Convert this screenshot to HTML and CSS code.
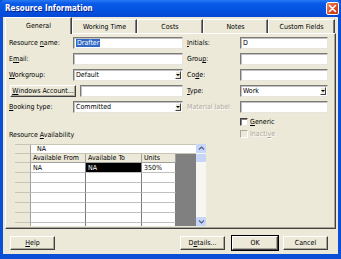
FILE: index.html
```html
<html>
<head>
<meta charset="UTF-8">
<title>Resource Information</title>
<link rel="stylesheet" href="styles.css">
</head>
<body>
<div class="window">
    <div class="titlebar">
        <span class="title">Resource Information</span>
        <span class="close">
            <svg width="9" height="9" viewBox="0 0 9 9"><path d="M1.5 1.5 L7.5 7.5 M7.5 1.5 L1.5 7.5" stroke="#fff" stroke-width="1.6" stroke-linecap="round"/></svg>
        </span>
    </div>

    <div class="client">
        <div class="tabs">
            <span class="tab active">General</span><span class="tab">Working Time</span><span class="tab">Costs</span><span class="tab">Notes</span><span class="tab">Custom Fields</span>
        </div>

        <div class="panel">
            <div class="form">
                <div class="col left">
                    <div class="fields">
                        <label>Resource <u>n</u>ame:</label>
                        <div class="input"><span class="sel">Drafter</span></div>
                        <label>E<u>m</u>ail:</label>
                        <div class="input"></div>
                        <label><u>W</u>orkgroup:</label>
                        <div class="input select">Default<span class="arrow"></span></div>
                        <div class="account">
                            <span class="btn account_btn"><u>W</u>indows Account...</span>
                            <div class="input"></div>
                        </div>
                        <label><u>B</u>ooking type:</label>
                        <div class="input select">Committed<span class="arrow"></span></div>
                    </div>

                    <div class="avail_label">Resource <u>A</u>vailability</div>

                    <div class="sheet_box">
                        <div class="sheet">
                            <div class="edit_row">
                                <span class="rh"></span><span class="edit_val">NA</span>
                            </div>
                            <div class="sheet_body">
                                <div class="cols">
                                    <div class="row head">
                                        <span class="rh"></span><span class="c from">Available From</span><span class="c to">Available To</span><span class="c units">Units</span>
                                    </div>
                                    <div class="row">
                                        <span class="rh"></span><span class="c from">NA</span><span class="c to current">NA</span><span class="c units">350%</span>
                                    </div>
                                    <div class="row"><span class="rh"></span><span class="c from"></span><span class="c to"></span><span class="c units"></span></div>
                                    <div class="row"><span class="rh"></span><span class="c from"></span><span class="c to"></span><span class="c units"></span></div>
                                    <div class="row"><span class="rh"></span><span class="c from"></span><span class="c to"></span><span class="c units"></span></div>
                                    <div class="row"><span class="rh"></span><span class="c from"></span><span class="c to"></span><span class="c units"></span></div>
                                    <div class="row"><span class="rh"></span><span class="c from"></span><span class="c to"></span><span class="c units"></span></div>
                                    <div class="row"><span class="rh"></span><span class="c from"></span><span class="c to"></span><span class="c units"></span></div>
                                </div>
                                <div class="dark"></div>
                            </div>
                        </div>
                        <div class="vscroll">
                            <span class="sbtn"><svg width="7" height="5" viewBox="0 0 7 5"><path d="M1 3.5 L3.5 1 L6 3.5" fill="none" stroke="#4d6185" stroke-width="1.2"/></svg></span>
                            <span class="thumb"></span>
                            <span class="track"></span>
                            <span class="sbtn"><svg width="7" height="5" viewBox="0 0 7 5"><path d="M1 1.5 L3.5 4 L6 1.5" fill="none" stroke="#4d6185" stroke-width="1.2"/></svg></span>
                        </div>
                    </div>
                </div>

                <div class="col right">
                    <div class="fields">
                        <label><u>I</u>nitials:</label>
                        <div class="input">D</div>
                        <label>Grou<u>p</u>:</label>
                        <div class="input"></div>
                        <label>Co<u>d</u>e:</label>
                        <div class="input"></div>
                        <label><u>T</u>ype:</label>
                        <div class="input select">Work<span class="arrow"></span></div>
                        <label class="disabled">Material label:</label>
                        <div class="input"></div>
                    </div>
                    <div class="checks">
                        <div class="check"><span class="box"></span><span><u>G</u>eneric</span></div>
                        <div class="check disabled"><span class="box"></span><span>Inacti<u>v</u>e</span></div>
                    </div>
                </div>
            </div>
        </div>

        <div class="buttons">
            <span class="btn help"><u>H</u>elp</span>
            <div class="right_buttons">
                <span class="btn details">D<u>e</u>tails...</span>
                <span class="btn ok">OK</span>
                <span class="btn cancel">Cancel</span>
            </div>
        </div>
    </div>
</div>
</body>
</html>
```

FILE: styles.css
```css
* {
    box-sizing: border-box;
}

body {
    margin: 0;
    font-family: "DejaVu Sans Condensed", "DejaVu Sans", sans-serif;
    font-size: 7px;
    color: #000;
    background: #0a4fd6;
}

u {
    text-decoration: underline;
    text-underline-offset: 1px;
}

.window {
    width: 341px;
    height: 259px;
    display: flex;
    flex-direction: column;
    background: #0a4fd6;
}

.titlebar {
    height: 17px;
    flex: 0 0 17px;
    display: flex;
    align-items: center;
    justify-content: space-between;
    padding: 0 2px 0 5px;
    background: linear-gradient(#2a7af5 0%, #0a5be8 20%, #0552e0 60%, #0448d4 100%);
    border-radius: 5px 5px 0 0;
}

.titlebar .title {
    color: #fff;
    font-family: "DejaVu Sans Condensed", "DejaVu Sans", sans-serif;
    font-weight: bold;
    font-size: 8px;
    text-shadow: 1px 1px #0a1e8a;
}

.titlebar .close {
    width: 13px;
    height: 13px;
    border: 1px solid #fff;
    border-radius: 2px;
    background: linear-gradient(135deg, #f08a64, #d9461c 60%, #c2381a);
    display: flex;
    align-items: center;
    justify-content: center;
}

.client {
    flex: 1;
    margin: 0 3px 5px 3px;
    background: #ece9d8;
    display: flex;
    flex-direction: column;
}

.tabs {
    height: 16px;
    display: flex;
    align-items: flex-end;
    padding-left: 2px;
}

.tab {
    height: 14px;
    display: flex;
    align-items: center;
    justify-content: center;
    border-top: 1px solid #fff;
    border-left: 1px solid #fff;
    border-right: 1px solid #404040;
    box-shadow: inset -1px 0 #808080;
    width: 65px;
}

.tab:first-child {
    width: 67px;
}

.tab:nth-child(3) {
    width: 66px;
}

.tab:last-child {
    width: 67px;
}

.tab.active {
    height: 17px;
    margin-bottom: -1px;
    position: relative;
    z-index: 1;
    background: #ece9d8;
    padding-bottom: 1px;
}

.panel {
    height: 196px;
    margin: 0 2px;
    border-top: 1px solid #fff;
    border-left: 1px solid #fff;
    border-right: 1px solid #404040;
    border-bottom: 1px solid #404040;
    box-shadow: inset -1px -1px #a9a797;
    padding: 3px 0 0 3px;
}

.form {
    display: flex;
    gap: 4px;
}

.col.left {
    width: 174px;
}

.col.right {
    width: 141px;
}

.fields {
    display: grid;
    grid-auto-rows: 12px;
    row-gap: 4px;
    align-items: center;
}

.left .fields {
    grid-template-columns: 64px 110px;
}

.right .fields {
    grid-template-columns: 53px 88px;
}

label {
    white-space: nowrap;
}

.disabled {
    color: #aca899;
    text-shadow: 1px 1px #fff;
}

.input {
    height: 12px;
    background: #fff;
    border: 1px solid;
    border-color: #7a7a7a #e8e6dc #e8e6dc #7a7a7a;
    box-shadow: inset 1px 1px #c0c0c0;
    padding-left: 2px;
    display: flex;
    align-items: center;
    position: relative;
    white-space: nowrap;
}

.input .sel {
    background: #316ac5;
    color: #fff;
    padding: 0 1px;
}

.input.select .arrow {
    position: absolute;
    right: 1px;
    top: 1px;
    width: 6px;
    height: 8px;
    background: #ece9d8;
    border: 1px solid;
    border-color: #fff #404040 #404040 #fff;
}

.input.select .arrow:after {
    content: '';
    position: absolute;
    left: 0px;
    top: 2px;
    border-left: 2px solid transparent;
    border-right: 2px solid transparent;
    border-top: 2px solid #000;
}

.account {
    grid-column: 1 / 3;
    display: flex;
    justify-content: space-between;
    padding-left: 1px;
}

.account .input {
    width: 103px;
}

.btn {
    display: flex;
    align-items: center;
    justify-content: center;
    background: #ece9d8;
    border: 1px solid;
    border-color: #fff #404040 #404040 #fff;
    box-shadow: inset -1px -1px #aca899;
    white-space: nowrap;
}

.account_btn {
    width: 66px;
    height: 12px;
}

.avail_label {
    margin-top: 18px;
    line-height: 9px;
    height: 9px;
}

.sheet_box {
    margin: 4px 0 0 6px;
    width: 191px;
    height: 82px;
    display: flex;
    overflow: hidden;
}

.sheet {
    width: 181px;
    display: flex;
    flex-direction: column;
}

.rh {
    width: 16px;
    flex: 0 0 16px;
    background: #ece9d8;
    border-right: 1px solid #a0a0a0;
    border-bottom: 1px solid #c8c5b5;
}

.edit_row {
    height: 10px;
    display: flex;
    border-top: 1px solid #c8c5b5;
}

.edit_val {
    flex: 1;
    background: #fff;
    padding-left: 6px;
    display: flex;
    align-items: center;
    border-bottom: 1px solid #c8c5b5;
}

.sheet_body {
    flex: 1;
    display: flex;
}

.cols {
    width: 161px;
    background: #fff;
}

.dark {
    width: 20px;
    background: #808080;
}

.row {
    display: flex;
    height: 10px;
}

.row.head {
    height: 9px;
}

.row .c {
    border-right: 1px solid #7a7a7a;
    border-bottom: 1px solid #c0c0c0;
    padding-left: 2px;
    display: flex;
    align-items: center;
    white-space: nowrap;
    overflow: hidden;
}

.row.head .c {
    background: #ece9d8;
    border-right-color: #a0a0a0;
    border-bottom-color: #a0a0a0;
}

.row .from {
    width: 55px;
}

.row .to {
    width: 56px;
}

.row .units {
    width: 34px;
}

.row .c.current {
    background: #000;
    color: #fff;
}

.vscroll {
    width: 10px;
    display: flex;
    flex-direction: column;
    background: #f7f6f1;
}

.vscroll .sbtn {
    height: 9px;
    display: flex;
    align-items: center;
    justify-content: center;
    background: #c6d5f8;
    border-radius: 1px;
}

.vscroll .thumb {
    height: 8px;
    margin-top: 1px;
    background: #c6d5f8;
    border-radius: 1px;
}

.vscroll .track {
    flex: 1;
}

.checks {
    margin: 4px 0 0 53px;
    display: flex;
    flex-direction: column;
    gap: 3px;
}

.check {
    display: flex;
    align-items: center;
    gap: 2px;
    height: 9px;
}

.check .box {
    width: 8px;
    height: 8px;
    background: #fff;
    border: 1px solid;
    border-color: #404040 #e8e6dc #e8e6dc #404040;
    box-shadow: inset 1px 1px #808080;
}

.check.disabled .box {
    background: #ece9d8;
    border-color: #aca899 #fff #fff #aca899;
    box-shadow: none;
}

.buttons {
    margin-top: 7px;
    padding: 0 10px 0 7px;
    display: flex;
    justify-content: space-between;
}

.buttons .btn {
    height: 14px;
}

.help {
    width: 45px;
}

.right_buttons {
    display: flex;
}

.details {
    width: 45px;
}

.ok {
    width: 46px;
    margin-left: 7px;
    outline: 1px solid #000;
}

.cancel {
    width: 45px;
    margin-left: 5px;
}
```
